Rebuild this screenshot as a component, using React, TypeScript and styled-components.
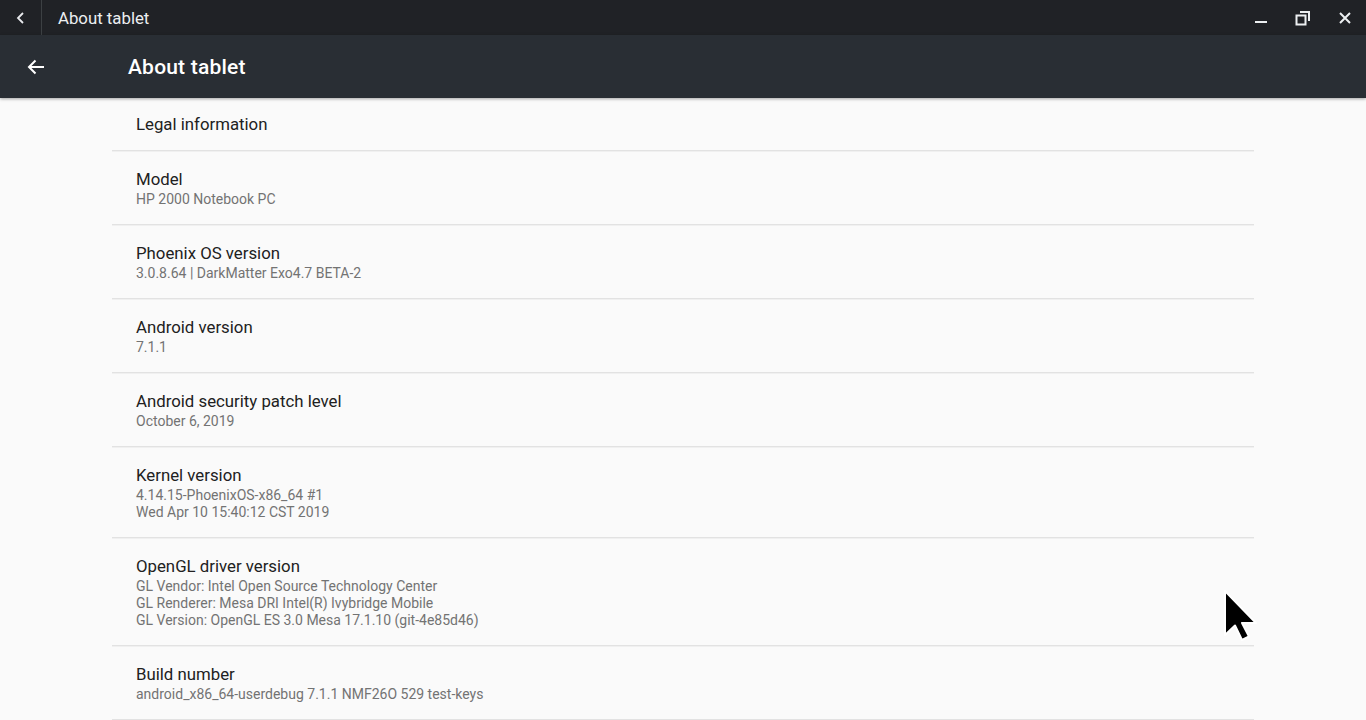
import React from 'react';
import styled, { createGlobalStyle } from 'styled-components';

const GlobalStyle = createGlobalStyle`
  html, body {
    margin: 0;
    padding: 0;
    background: #fafafa;
    font-family: Roboto, "Noto Sans", "Liberation Sans", sans-serif;
    overflow: hidden;
  }
`;

interface Pref {
  title: string;
  lines: string[];
}

const prefs: Pref[] = [
  { title: 'Model', lines: ['HP 2000 Notebook PC'] },
  { title: 'Phoenix OS version', lines: ['3.0.8.64 | DarkMatter Exo4.7 BETA-2'] },
  { title: 'Android version', lines: ['7.1.1'] },
  { title: 'Android security patch level', lines: ['October 6, 2019'] },
  { title: 'Kernel version', lines: ['4.14.15-PhoenixOS-x86_64 #1', 'Wed Apr 10 15:40:12 CST 2019'] },
  {
    title: 'OpenGL driver version',
    lines: [
      'GL Vendor: Intel Open Source Technology Center',
      'GL Renderer: Mesa DRI Intel(R) Ivybridge Mobile',
      'GL Version: OpenGL ES 3.0 Mesa 17.1.10 (git-4e85d46)',
    ],
  },
  { title: 'Build number', lines: ['android_x86_64-userdebug 7.1.1 NMF26O 529 test-keys'] },
];

const Window = styled.div`
  position: relative;
  width: 1366px;
  height: 720px;
  display: flex;
  flex-direction: column;
  overflow: hidden;
`;

const TitleBar = styled.div`
  height: 35px;
  flex: none;
  display: flex;
  align-items: center;
  background: #202226;
  color: #e8eaed;
`;

const TitleBack = styled.div`
  width: 42px;
  height: 100%;
  display: flex;
  align-items: center;
  justify-content: center;
  border-right: 1px solid #3c4043;
  box-sizing: border-box;
`;

const WindowTitle = styled.div`
  flex: 1;
  margin-left: 16px;
  font-size: 16.8px;
  color: #eceff1;
`;

const Controls = styled.div`
  display: flex;
  align-items: center;
`;

const ControlButton = styled.div`
  width: 42px;
  height: 35px;
  display: flex;
  align-items: center;
  justify-content: center;
`;

const Toolbar = styled.div`
  height: 63px;
  flex: none;
  display: flex;
  align-items: center;
  background: #292e34;
  color: #ffffff;
  box-shadow: 0 1px 3px rgba(0, 0, 0, 0.35);
  position: relative;
  z-index: 1;
`;

const NavButton = styled.div`
  width: 72px;
  display: flex;
  align-items: center;
  justify-content: center;
`;

const ToolbarTitle = styled.div`
  margin-left: 56px;
  font-size: 21px;
  font-weight: 500;
  letter-spacing: 0.2px;
`;

const List = styled.div`
  margin: 0 112px;
  display: flex;
  flex-direction: column;
`;

const Row = styled.div<{ $single?: boolean }>`
  padding: ${p => (p.$single ? '14px 24px 14px' : '16px 24px 16px')};
  border-bottom: 1px solid #e2e2e2;
  box-shadow: 0 1px 0 #f0f0f0;
`;

const Title = styled.div`
  font-size: 16.8px;
  line-height: 24px;
  color: #212121;
`;

const Summary = styled.div`
  font-size: 14px;
  line-height: 17px;
  color: #737373;
`;

const Cursor = styled.svg`
  position: absolute;
  left: 1222px;
  top: 588px;
`;

export default function App() {
  return (
    <Window>
      <GlobalStyle />
      <TitleBar>
        <TitleBack>
          <svg width="14" height="14" viewBox="0 0 14 14">
            <path d="M9 2 L4 7 L9 12" fill="none" stroke="#e8eaed" strokeWidth="1.8" />
          </svg>
        </TitleBack>
        <WindowTitle>About tablet</WindowTitle>
        <Controls>
          <ControlButton>
            <svg width="14" height="14" viewBox="0 0 14 14">
              <rect x="1" y="10" width="12" height="2" fill="#eceff1" />
            </svg>
          </ControlButton>
          <ControlButton>
            <svg width="16" height="16" viewBox="0 0 16 16">
              <rect x="1.5" y="5.5" width="9" height="9" fill="none" stroke="#eceff1" strokeWidth="2" />
              <path d="M5 2 H14 V11" fill="none" stroke="#eceff1" strokeWidth="2" />
            </svg>
          </ControlButton>
          <ControlButton>
            <svg width="14" height="14" viewBox="0 0 14 14">
              <path d="M2 2 L12 12 M12 2 L2 12" stroke="#eceff1" strokeWidth="2" />
            </svg>
          </ControlButton>
        </Controls>
      </TitleBar>
      <Toolbar>
        <NavButton>
          <svg width="18" height="18" viewBox="0 0 18 18">
            <path d="M17 9 H2 M8.5 2.5 L2 9 L8.5 15.5" fill="none" stroke="#ffffff" strokeWidth="2" />
          </svg>
        </NavButton>
        <ToolbarTitle>About tablet</ToolbarTitle>
      </Toolbar>
      <List>
        <Row $single>
          <Title>Legal information</Title>
        </Row>
        {prefs.map(p => (
          <Row key={p.title}>
            <Title>{p.title}</Title>
            {p.lines.map(l => (
              <Summary key={l}>{l}</Summary>
            ))}
          </Row>
        ))}
      </List>
      <Cursor width="40" height="56" viewBox="0 0 40 56">
        <path d="M3 3 L3 47 L13 37.5 L20 52 L27 48.5 L20 35 L34 35 Z" fill="#000" stroke="#fff" strokeWidth="2" strokeLinejoin="round" />
      </Cursor>
    </Window>
  );
}
